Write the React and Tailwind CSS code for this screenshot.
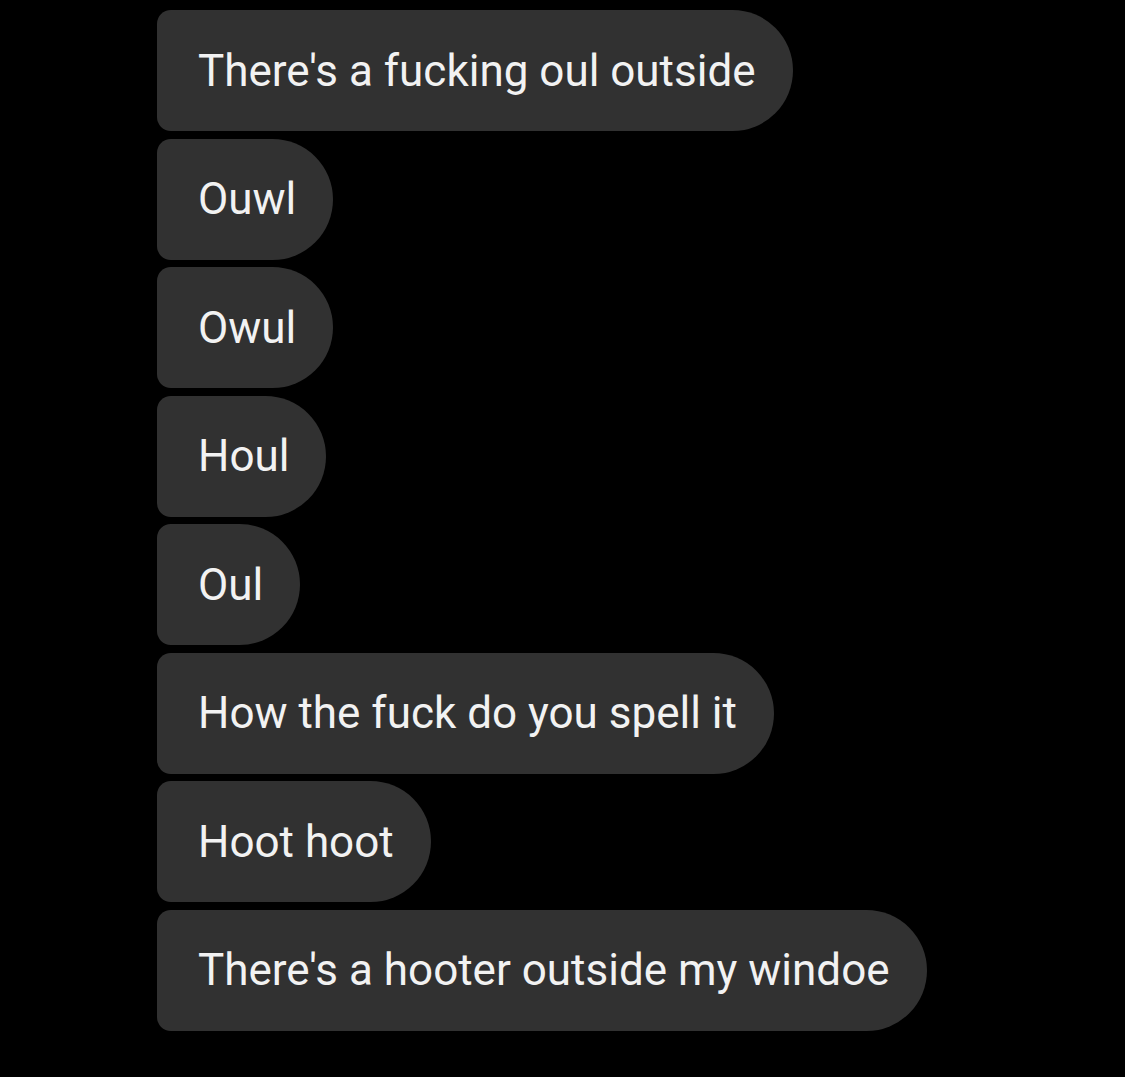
const messages = [
  "There's a fucking oul outside",
  "Ouwl",
  "Owul",
  "Houl",
  "Oul",
  "How the fuck do you spell it",
  "Hoot hoot",
  "There's a hooter outside my windoe",
];

export default function App() {
  return (
    <div className="min-h-[1077px] w-[1125px] bg-black pt-[10px] pl-[157px] font-['Roboto',sans-serif]">
      <div className="flex flex-col items-start gap-[7.5px]">
        {messages.map((m, i) => (
          <div
            key={i}
            className="flex h-[121px] items-center rounded-l-[14px] rounded-r-[61px] bg-[#313131] pl-[41px] pr-[37px] text-[44px] text-[#f2f2f2] whitespace-nowrap"
          >
            {m}
          </div>
        ))}
      </div>
    </div>
  );
}
